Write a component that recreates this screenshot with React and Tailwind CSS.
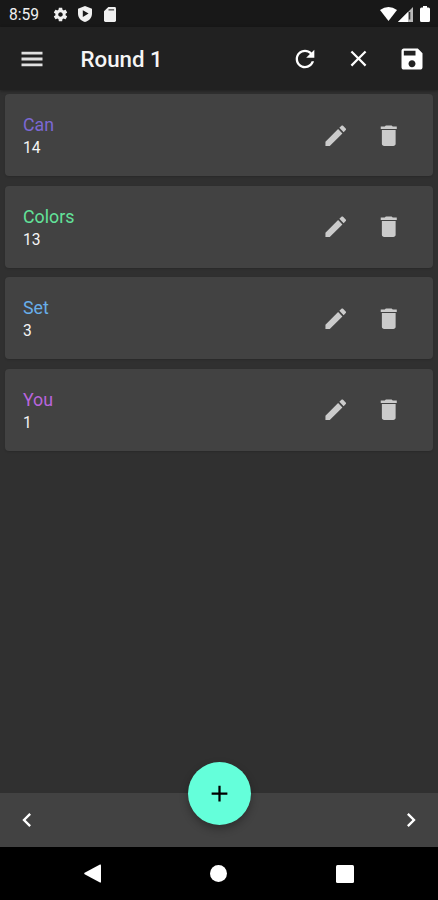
const icons = {
  menu: "M3 18.200h18v-2.400H3v2.400zm0-5h18v-2.400H3v2.400zm0-7.400v2.400h18V5.800H3z",
  refresh:
    "M17.65 6.35C16.2 4.9 14.21 4 12 4c-4.42 0-7.99 3.58-7.99 8s3.57 8 7.99 8c3.73 0 6.84-2.55 7.73-6h-2.08c-.82 2.33-3.04 4-5.65 4-3.31 0-6-2.69-6-6s2.69-6 6-6c1.66 0 3.14.69 4.22 1.78L13 11h7V4l-2.35 2.35z",
  close:
    "M19 6.41L17.59 5 12 10.59 6.41 5 5 6.41 10.59 12 5 17.59 6.41 19 12 13.41 17.59 19 19 17.59 13.41 12z",
  save:
    "M17 3H5c-1.11 0-2 .9-2 2v14c0 1.1.89 2 2 2h14c1.1 0 2-.9 2-2V7l-4-4zm-5 16c-1.66 0-3-1.34-3-3s1.34-3 3-3 3 1.34 3 3-1.34 3-3 3zm3-10H5V5h10v4z",
  edit:
    "M3 17.25V21h3.75L17.81 9.94l-3.75-3.75L3 17.25zM20.71 7.04c.39-.39.39-1.02 0-1.41l-2.34-2.34c-.39-.39-1.02-.39-1.41 0l-1.83 1.83 3.75 3.75 1.83-1.83z",
  trash:
    "M6 19c0 1.1.9 2 2 2h8c1.1 0 2-.9 2-2V7H6v12zM19 4h-3.5l-1-1h-5l-1 1H5v2h14V4z",
  add: "M19 13h-6v6h-2v-6H5v-2h6V5h2v6h6v2z",
  left: "M15.41 7.41L14 6l-6 6 6 6 1.41-1.41L10.83 12z",
  right: "M10 6L8.59 7.41 13.17 12l-4.58 4.59L10 18l6-6z",
  gear:
    "M19.14 12.94c.04-.3.06-.61.06-.94 0-.32-.02-.64-.07-.94l2.03-1.58c.18-.14.23-.41.12-.61l-1.92-3.32c-.12-.22-.37-.29-.59-.22l-2.39.96c-.5-.38-1.03-.7-1.62-.94l-.36-2.54c-.04-.24-.24-.41-.48-.41h-3.84c-.24 0-.43.17-.47.41l-.36 2.54c-.59.24-1.13.57-1.62.94l-2.39-.96c-.22-.08-.47 0-.59.22L2.74 8.87c-.12.21-.08.47.12.61l2.03 1.58c-.05.3-.09.63-.09.94s.02.64.07.94l-2.03 1.58c-.18.14-.23.41-.12.61l1.92 3.32c.12.22.37.29.59.22l2.39-.96c.5.38 1.03.7 1.62.94l.36 2.54c.05.24.24.41.48.41h3.84c.24 0 .44-.17.47-.41l.36-2.54c.59-.24 1.13-.56 1.62-.94l2.39.96c.22.08.47 0 .59-.22l1.92-3.32c.12-.22.07-.47-.12-.61l-2.01-1.58zM12 15.2c-1.760 0-3.200-1.440-3.200-3.200s1.440-3.200 3.200-3.200 3.200 1.440 3.200 3.200-1.440 3.200-3.200 3.200z",
};

function Icon({ name, className }) {
  return (
    <svg viewBox="0 0 24 24" fill="currentColor" className={className} aria-hidden="true">
      <path d={icons[name]} />
    </svg>
  );
}

const players = [
  { name: "Can", score: 14, color: "text-[#7c68d4]" },
  { name: "Colors", score: 13, color: "text-[#62e29a]" },
  { name: "Set", score: 3, color: "text-[#68aeea]" },
  { name: "You", score: 1, color: "text-[#b865dc]" },
];

function StatusBar() {
  return (
    <div className="flex h-[27px] shrink-0 items-center bg-[#181818] pt-px pr-[8px] pl-[9px] text-[#f0f0f0]">
      <span className="w-[31px] pt-[3px] text-[15.600px] leading-none">8:59</span>
      <Icon name="gear" className="ml-[11.500px] h-[17px] w-[17px]" />
      <svg viewBox="0 0 14 16" className="ml-[9px] h-[16px] w-[14px]" aria-hidden="true">
        <path
          fill="currentColor"
          fillRule="evenodd"
          d="M7 0L0 2.7v4.7c0 4 2.9 7.5 7 8.6 4.100-1.100 7-4.600 7-8.600V2.700zM4.800 4.200v6.800L10.600 7.600z"
        />
      </svg>
      <svg viewBox="0 0 12 15" className="ml-[12px] h-[15px] w-[12px]" aria-hidden="true">
        <path fill="currentColor" d="M4.300 0H10.600Q12 0 12 1.400V13.600Q12 15 10.600 15H1.400Q0 15 0 13.600V4.300z" />
        <path fill="#6a6a6a" d="M4.500 2h5.600v1.600H4.500z" />
      </svg>
      <svg viewBox="0 0 17 14" className="ml-auto h-[14px] w-[17px]" aria-hidden="true">
        <path fill="white" d="M0 3Q8.500-3 17 3L8.500 14z" />
      </svg>
      <svg viewBox="0 0 15 15" className="ml-px h-[15px] w-[15px]" aria-hidden="true">
        <path fill="#b8b8b8" d="M15 0V15H0z" />
        <path fill="white" d="M10 5V15H0z" />
        <path fill="#303030" d="M10.800 5h1.500v7.500h-1.500z" />
      </svg>
      <svg viewBox="0 0 10 16" className="ml-[7px] h-[16px] w-[10px]" aria-hidden="true">
        <path fill="white" d="M3 0h4v1.500h1.500Q10 1.500 10 3v11.500Q10 16 8.500 16h-7Q0 16 0 14.500V3Q0 1.500 1.500 1.500H3z" />
      </svg>
    </div>
  );
}

function PlayerCard({ name, score, color }) {
  return (
    <li className="flex h-[82px] items-center rounded-[4px] bg-[#424242] pr-[30.500px] pl-[18px] shadow-[0_1px_2px_rgba(0,0,0,0.15)]">
      <div className="flex-1 pt-[4px]">
        <div className={`text-[17.800px] leading-[23px] ${color}`}>{name}</div>
        <div className="text-[15.600px] leading-[25px] text-[#f5f5f5]">{score}</div>
      </div>
      <div className="flex gap-[26px] pt-[1px] text-[#cbcbcb]">
        <button aria-label="Edit">
          <Icon name="edit" className="h-[27.500px] w-[27.500px]" />
        </button>
        <button aria-label="Delete">
          <Icon name="trash" className="h-[27.500px] w-[27.500px]" />
        </button>
      </div>
    </li>
  );
}

export default function App() {
  return (
    <div className="flex h-[900px] w-[438px] flex-col overflow-hidden bg-[#303030] font-['Roboto',sans-serif]">
      <StatusBar />
      <header className="flex h-[63px] shrink-0 items-center bg-[#212121] pr-[12.500px] pl-[18px] text-white shadow-[0_1px_3px_rgba(0,0,0,0.35)]">
        <button aria-label="Menu">
          <Icon name="menu" className="h-[28px] w-[28px] text-[#e0e0e0]" />
        </button>
        <h1 className="ml-[34.500px] flex-1 text-[22.300px] leading-[28px] font-medium text-[#f5f5f5]">Round 1</h1>
        <div className="flex gap-[26px]">
          <button aria-label="Refresh">
            <Icon name="refresh" className="h-[28px] w-[28px]" />
          </button>
          <button aria-label="Close">
            <Icon name="close" className="h-[27px] w-[27px]" />
          </button>
          <button aria-label="Save">
            <Icon name="save" className="h-[28px] w-[28px]" />
          </button>
        </div>
      </header>
      <ul className="flex flex-1 flex-col gap-[9.500px] px-[5px] pt-[4px]">
        {players.map((player) => (
          <PlayerCard key={player.name} {...player} />
        ))}
      </ul>
      <footer className="relative flex h-[54px] shrink-0 items-center justify-between bg-[#424242] px-[13px] text-white">
        <button aria-label="Previous round">
          <Icon name="left" className="h-[28px] w-[28px]" />
        </button>
        <button
          aria-label="Add player"
          className="absolute -top-[31px] left-[188px] flex h-[63px] w-[63px] items-center justify-center rounded-full bg-[#64ffda] text-black shadow-[0_4px_8px_rgba(0,0,0,0.3)]"
        >
          <Icon name="add" className="h-[27px] w-[27px]" />
        </button>
        <button aria-label="Next round">
          <Icon name="right" className="h-[28px] w-[28px]" />
        </button>
      </footer>
      <nav className="flex h-[53px] shrink-0 items-center justify-between bg-black pr-[84px] pl-[83.500px]">
        <svg viewBox="0 0 17 19" className="h-[19px] w-[17px]" aria-hidden="true">
          <path fill="white" d="M16 .5Q17 0 17 1.500v16Q17 19 16 18.500L.6 10.200Q-.2 9.500 .6 8.800z" />
        </svg>
        <span className="ml-[1px] h-[17px] w-[17px] rounded-full bg-white" />
        <span className="h-[18px] w-[18px] rounded-[1.500px] bg-white" />
      </nav>
    </div>
  );
}
